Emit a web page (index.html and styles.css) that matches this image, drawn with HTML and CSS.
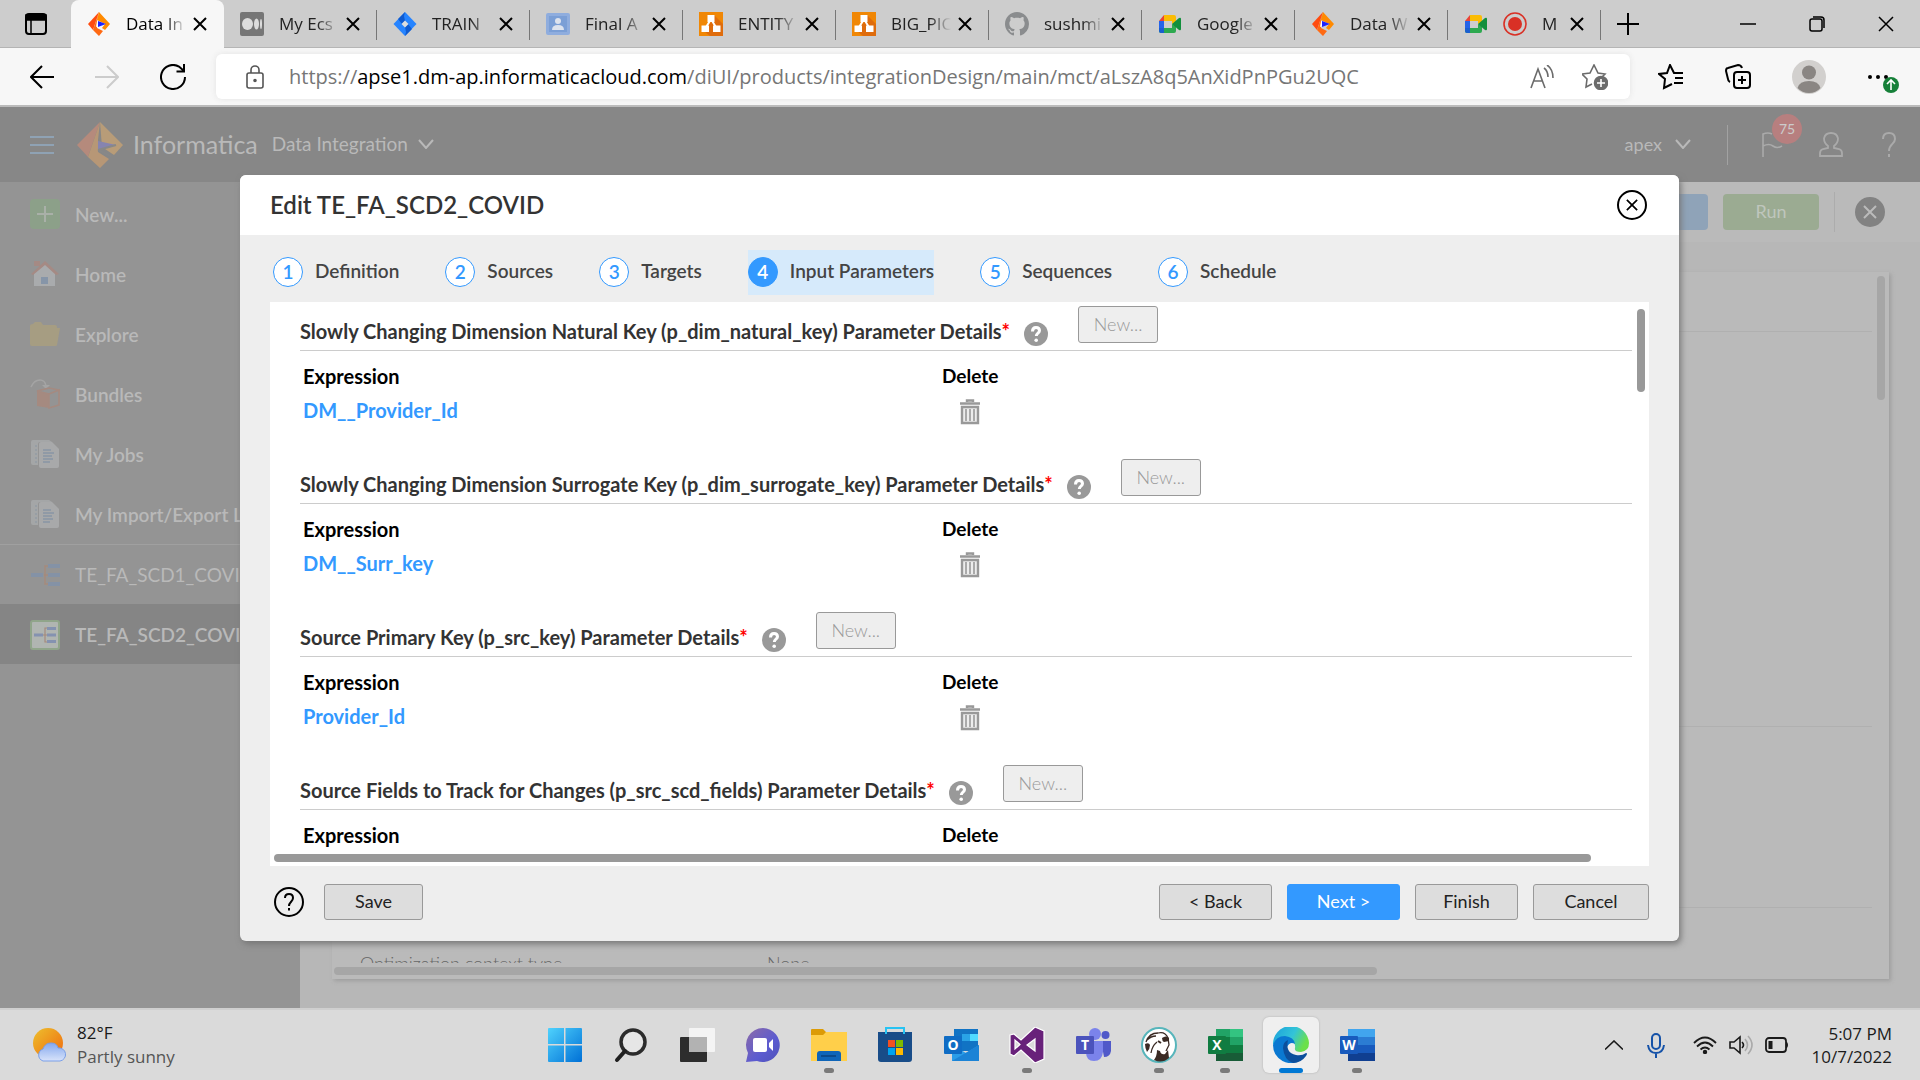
FILE: index.html
```html
<!DOCTYPE html>
<html lang="en">
<head>
<meta charset="utf-8">
<title>Data Integration</title>
<meta name="viewport" content="width=device-width, initial-scale=1">
<link rel="stylesheet" href="styles.css">
</head>
<body>
<svg class="sprite" aria-hidden="true">
  <symbol id="informatica" viewBox="0 0 24 24">
    <path d="M12 0 1 12l5 6z" fill="#ff4b0f"/>
    <path d="M12 0 6 18l6 6 4-5-6-3V9z" fill="#ff6a13"/>
    <path d="M12 0l11 12-5 6-3-2 3-4-8-4z" fill="#ff8a00"/>
    <path d="M10 9 9 15l9-3z" fill="#fff"/>
    <path d="M11 9v6l8-3z" fill="#1a23ff"/>
  </symbol>
  <symbol id="drawio" viewBox="0 0 24 24">
    <path d="M0 0h24v24H0z" fill="#f08705"/>
    <path d="M15 3l9 9v12H11l-6-5 7-9z" fill="#df6c0c"/>
    <path d="M12 7 6 17M12 7l6 10" stroke="#fff" stroke-width="2"/>
    <path d="M8.500 3h7v7h-7zM2.500 13.500h7.500v6.500H2.500zM14 13.500h7.500v6.500H14z" fill="#fff"/>
  </symbol>
  <symbol id="meet" viewBox="0 0 24 24">
    <path d="M1 9h5v11H3a2 2 0 0 1-2-2z" fill="#2563e8"/>
    <path d="M6 3v6H1z" fill="#ea4335"/>
    <path d="M6 3h10a2 2 0 0 1 2 2v5l-4 2V9H6z" fill="#fbbc04"/>
    <path d="M1 16h13v-4l4 2v5a2 2 0 0 1-2 2H3a2 2 0 0 1-2-2z" fill="#2da94f"/>
    <path d="M1 16h5v5H3a2 2 0 0 1-2-2z" fill="#1a5fd0"/>
    <path d="M14 12l7-6q2-1 2 1v10q0 2-2 1z" fill="#128f3c"/>
  </symbol>
  <symbol id="x" viewBox="0 0 14 14"><path d="M1 1l12 12M13 1 1 13" fill="none" stroke="currentColor" stroke-width="2"/></symbol>
  <symbol id="chevron" viewBox="0 0 16 10"><path d="M1 1l7 8 7-8" fill="none" stroke="currentColor" stroke-width="2"/></symbol>
  <symbol id="help" viewBox="0 0 24 24">
    <circle cx="12" cy="12" r="12" fill="#999"/>
    <path d="M8.500 9.500q0-4 3.500-4t3.500 3.300c0 2.400-3.200 2.400-3.200 5.200" fill="none" stroke="#fff" stroke-width="3"/>
    <circle cx="12.200" cy="18.200" r="1.800" fill="#fff"/>
  </symbol>
  <symbol id="trash" viewBox="0 0 22 26">
    <path d="M1 4.500h20M8 3V1.500h6V3" fill="none" stroke="#999" stroke-width="2.400"/>
    <path d="M3 8h16v16H3z" fill="#ededed" stroke="#999" stroke-width="2.400"/>
    <path d="M7 10v12M11 10v12M15 10v12" stroke="#999" stroke-width="1.600"/>
  </symbol>
  <symbol id="jobs" viewBox="0 0 30 30">
    <path d="M1 3q0-2 2-2h16l3 2H10q-2 0-2 2v21H3q-2 0-2-2z" fill="#a4a6a7"/>
    <path d="M5 7h2M5 11h2M5 15h2M5 19h2M5 23h2" stroke="#8a96a2"/>
    <path d="M9 5q0-2 2-2h11l7 7v17q0 2-2 2H11q-2 0-2-2z" fill="#a8a9aa"/>
    <path d="M13 11h8M13 14h11M13 17h9M13 20h10M13 23h7" stroke="#8895a5" stroke-width="1.600"/>
  </symbol>
  <symbol id="flow" viewBox="0 0 30 24">
    <path d="M14 12h4M20 3h-5v18h5M15 12h5" fill="none" stroke="#a58a7c" stroke-width="1.500"/>
    <path d="M1 10h12v4H1zM18 1h12v4H18zM18 10h12v4H18zM18 19h12v4H18z" fill="#8492a6"/>
  </symbol>
</svg>

<header class="tabs">
  <button class="tab-menu" aria-label="Tab actions"><svg width="22" height="22" viewBox="0 0 22 22"><rect x="1" y="1" width="20" height="20" rx="3" fill="none" stroke="#000" stroke-width="2"/><path d="M1 2h20v5H1zM6 7v14" stroke="#000" stroke-width="1.500"/></svg></button>
  <div class="tab active"><svg class="fav"><use href="#informatica"/></svg><span>Data In</span><button aria-label="Close"><svg><use href="#x"/></svg></button></div>
  <div class="tab"><svg class="fav" viewBox="0 0 24 24"><rect width="24" height="24" rx="2" fill="#767676"/><ellipse cx="7.500" cy="12" rx="5.500" ry="6" fill="#ddd"/><ellipse cx="16.500" cy="12" rx="2.500" ry="5.500" fill="#ddd"/><ellipse cx="21" cy="12" rx="1" ry="5" fill="#ddd"/></svg><span>My Ecs</span><button aria-label="Close"><svg><use href="#x"/></svg></button></div>
  <div class="tab"><svg class="fav" viewBox="0 0 24 24"><path d="M12 0l11.500 12L12 24 .5 12z" fill="#2684ff"/><path d="M12 0l-1 4 1 5-3 3-4-5zM12 24l1-4-1-5 3-3 4 5z" fill="#0f5bd0"/><path d="M12 8.500l3.500 3.500-3.500 3.500L8.500 12z" fill="#ddd"/></svg><span>TRAIN</span><button aria-label="Close"><svg><use href="#x"/></svg></button></div>
  <div class="tab"><svg class="fav" viewBox="0 0 24 24"><rect y="1" width="24" height="22" rx="2" fill="#8fadde"/><rect x="3" y="4" width="18" height="16" fill="#7b9fd6"/><circle cx="12" cy="9" r="3" fill="#dde3ee"/><path d="M6 18q0-5 6-5t6 5z" fill="#dde3ee"/></svg><span>Final A</span><button aria-label="Close"><svg><use href="#x"/></svg></button></div>
  <div class="tab"><svg class="fav"><use href="#drawio"/></svg><span>ENTITY</span><button aria-label="Close"><svg><use href="#x"/></svg></button></div>
  <div class="tab"><svg class="fav"><use href="#drawio"/></svg><span>BIG_PIC</span><button aria-label="Close"><svg><use href="#x"/></svg></button></div>
  <div class="tab"><svg class="fav" viewBox="0 0 16 16"><path fill="#8a8c8e" d="M8 0C3.580 0 0 3.580 0 8c0 3.540 2.290 6.530 5.470 7.590.4.070.55-.17.55-.38 0-.19-.01-.82-.01-1.490-2.010.37-2.530-.49-2.690-.94-.09-.23-.48-.94-.82-1.130-.28-.15-.68-.52-.01-.53.63-.01 1.080.58 1.230.82.72 1.210 1.870.87 2.330.66.07-.52.28-.87.51-1.070-1.780-.2-3.640-.89-3.640-3.950 0-.87.31-1.590.82-2.150-.08-.2-.36-1.020.08-2.120 0 0 .67-.21 2.200.82.64-.18 1.320-.27 2-.27s1.360.09 2 .27c1.530-1.040 2.200-.82 2.200-.82.44 1.100.16 1.920.08 2.120.51.56.82 1.270.82 2.150 0 3.070-1.870 3.750-3.650 3.950.29.25.54.73.54 1.480 0 1.070-.01 1.930-.01 2.200 0 .21.15.46.55.38A8.010 8.010 0 0 0 16 8c0-4.420-3.580-8-8-8z"/></svg><span>sushmi</span><button aria-label="Close"><svg><use href="#x"/></svg></button></div>
  <div class="tab"><svg class="fav"><use href="#meet"/></svg><span>Google</span><button aria-label="Close"><svg><use href="#x"/></svg></button></div>
  <div class="tab"><svg class="fav"><use href="#informatica"/></svg><span>Data W</span><button aria-label="Close"><svg><use href="#x"/></svg></button></div>
  <div class="tab"><svg class="fav"><use href="#meet"/></svg><svg class="fav" viewBox="0 0 24 24"><circle cx="12" cy="12" r="11" fill="none" stroke="#d93025" stroke-width="1.600"/><circle cx="12" cy="12" r="7" fill="#d93025"/></svg><span>M</span><button aria-label="Close"><svg><use href="#x"/></svg></button></div>
  <button class="new-tab" aria-label="New tab"><svg width="22" height="22" viewBox="0 0 22 22"><path d="M11 0v22M0 11h22" stroke="#000" stroke-width="2"/></svg></button>
  <div class="window-buttons">
    <button aria-label="Minimize"><svg width="16" height="16" viewBox="0 0 16 16"><path d="M0 8h16" stroke="#000" stroke-width="1.500"/></svg></button>
    <button aria-label="Restore"><svg width="16" height="16" viewBox="0 0 16 16" fill="none" stroke="#000" stroke-width="1.500"><rect x="1" y="3" width="12" height="12" rx="2"/><path d="M4 1h8q3 0 3 3v8"/></svg></button>
    <button aria-label="Close window"><svg width="16" height="16" viewBox="0 0 16 16"><path d="M1 1l14 14M15 1 1 15" stroke="#000" stroke-width="1.500"/></svg></button>
  </div>
</header>

<div class="toolbar">
  <button aria-label="Back"><svg width="24" height="24" viewBox="0 0 24 24" fill="none" stroke="#000" stroke-width="2"><path d="M24 12H1M12 1 1 12l11 11"/></svg></button>
  <button aria-label="Forward" disabled><svg width="24" height="24" viewBox="0 0 24 24" fill="none" stroke="#ccc" stroke-width="2"><path d="M0 12h23M12 1l11 11-11 11"/></svg></button>
  <button aria-label="Refresh"><svg width="26" height="26" viewBox="0 0 26 26" fill="none" stroke="#000" stroke-width="2"><path d="M25 13A12 12 0 1 1 19 2.600L24 7M24 0v7.500h-7.500"/></svg></button>
  <div class="address">
    <svg width="18" height="24" viewBox="0 0 18 24" fill="none" stroke="#555" stroke-width="1.600"><rect x="1" y="8" width="16" height="15" rx="2"/><path d="M5 8V5a4 4 0 0 1 8 0v3"/><circle cx="9" cy="15.500" r="1" fill="#555"/></svg>
    <div class="url" role="textbox" aria-label="Address and search bar" contenteditable="true" spellcheck="false">https://<b>apse1.dm-ap.informaticacloud.com</b>/diUI/products/integrationDesign/main/mct/aLszA8q5AnXidPnPGu2UQC</div>
    <button aria-label="Read aloud"><svg width="24" height="24" viewBox="0 0 24 24" fill="none" stroke="#6b6b6b" stroke-width="1.600"><path d="M1 23 8 4l7 19M4 16h8M14 3q4 3 4 9M17 0q6 4 6 13"/></svg></button>
    <button aria-label="Add to favorites"><svg width="26" height="26" viewBox="0 0 26 26" fill="none" stroke="#6b6b6b" stroke-width="1.600"><path d="M10 20l-6 3 1-8-5-5 8-1 4-8 4 8 7 1-3 3"/><circle cx="19" cy="19" r="6.500" fill="#6b6b6b"/><path d="M19 15v8M15 19h8" stroke="#fff"/></svg></button>
  </div>
  <button class="favorites" aria-label="Favorites"><svg width="26" height="26" viewBox="0 0 26 26" fill="none" stroke="#000" stroke-width="2"><path d="M14 20l-8 4 1-9-6-5 8-1 3-8 4 8h9M17 14h8M16 19h9"/></svg></button>
  <button aria-label="Collections"><svg width="26" height="26" viewBox="0 0 26 26" fill="none" stroke="#000" stroke-width="2"><rect x="9" y="8" width="16" height="16" rx="3"/><path d="M17 12v8M13 16h8M5 18q-2-1-2-3L1 7q0-3 2-3l10-3q3 0 4 3"/></svg></button>
  <button class="profile" aria-label="Profile"><svg width="34" height="34" viewBox="0 0 34 34"><circle cx="17" cy="17" r="17" fill="#d2d0ce"/><circle cx="17" cy="12.500" r="7" fill="#8a8683"/><path d="M5.500 28q2-7 11.500-7t11.500 7Q24 33 17 33T5.500 28z" fill="#8a8683"/></svg></button>
  <button aria-label="Settings and more"><svg width="32" height="40" viewBox="0 0 32 40"><circle cx="3" cy="20" r="2"/><circle cx="11" cy="20" r="2"/><circle cx="19" cy="20" r="2"/><circle cx="24" cy="28" r="8" fill="#168039"/><path d="M24 33V23.500M20 27l4-4 4 4" fill="none" stroke="#fff" stroke-width="1.600"/></svg></button>
</div>

<div class="app">
  <div class="app-header">
    <button class="burger" aria-label="Menu"><svg width="24" height="20" viewBox="0 0 24 20"><path d="M0 2h24M0 10h24M0 18h24" stroke="#8fa2b4" stroke-width="2"/></svg></button>
    <svg class="logo" width="46" height="46" viewBox="0 0 46 46"><path d="M23 0 0 23l11 12z" fill="#b58a7c"/><path d="M23 0 11 35l12 11 9-9-11-7V18z" fill="#b79776"/><path d="M23 0l23 23-9 10-12-8z" fill="#b89c78"/><path d="M21 19v9l18-5z" fill="#8684b0"/><path d="M21 28l13 6M21 28l18-5" stroke="#888" stroke-width="2"/></svg>
    <span class="brand">Informatica</span>
    <button class="product">Data Integration <svg width="16" height="10"><use href="#chevron"/></svg></button>
    <button class="org">apex <svg width="16" height="10"><use href="#chevron"/></svg></button>
    <span class="sep"></span>
    <button class="flag" aria-label="Notifications"><svg width="22" height="26" viewBox="0 0 22 26" fill="none" stroke="#aaa" stroke-width="1.600"><path d="M2 25V2q5-2 9 0M2 14q6-3 10 0t9 0"/></svg><span class="badge">75</span></button>
    <button aria-label="User"><svg width="24" height="26" viewBox="0 0 24 26" fill="none" stroke="#aaa" stroke-width="1.800"><path d="M9 14Q5 11 5 6.500 6 1 12 1t7 5.500Q19 11 15 14v2l5 1q3 1 3 4v3H1v-3q0-3 3-4l5-1z"/></svg></button>
    <button aria-label="Help"><svg width="16" height="26" viewBox="0 0 16 26" fill="none" stroke="#aaa" stroke-width="2"><path d="M2 7q0-6 6-6t6 6c0 5-6 5-6 12M8 22v3"/></svg></button>
  </div>

  <div class="workspace">
    <nav class="side">
      <a href="#"><svg viewBox="0 0 30 30"><rect width="30" height="30" rx="4" fill="#8ca089"/><path d="M15 7v16M7 15h16" stroke="#a9b0a8" stroke-width="2"/></svg>New...</a>
      <a href="#"><svg viewBox="0 0 30 30"><path d="M4 2h6v5H4z" fill="#a58a84"/><path d="M4 14 15 5l10 9v13H4z" fill="#a9abad"/><path d="M1 15 15 2l14 13-3 1L15 6 3 16z" fill="#a58a84"/><path d="M11 18h7v7h-7z" fill="#8695a8"/></svg>Home</a>
      <a href="#"><svg viewBox="0 0 30 30"><path d="M0 7q0-2 3-2l2-2h6l2 3h12q2 0 2 3h3l-3 17q0 1-2 1H2q-2 0-2-2z" fill="#a69d82"/></svg>Explore</a>
      <a href="#"><svg viewBox="0 0 30 30"><path d="M1 8Q4 1 10 1q5 0 6 6" fill="none" stroke="#a4a4a4" stroke-width="1.500"/><path d="M12 6l4 4 4-4z" fill="#a4a4a4"/><path d="M7 12l12 3v14L7 27z" fill="#a58a80"/><path d="M7 12l12-3 10 2-10 4zM19 15l10-4v15l-10 3z" fill="none" stroke="#a58a80" stroke-width="1.600"/></svg>Bundles</a>
      <a href="#"><svg><use href="#jobs"/></svg>My Jobs</a>
      <a href="#"><svg><use href="#jobs"/></svg>My Import/Export Logs</a>
      <a href="#" class="open"><svg><use href="#flow"/></svg>TE_FA_SCD1_COVID</a>
      <a href="#" class="open current"><svg viewBox="0 0 30 30"><rect x="1" y="1" width="28" height="28" rx="2" fill="#b0b5b1" stroke="#90a58a" stroke-width="2"/><path d="M13 15h4M19 8h-4v14h4M15 15h4" fill="none" stroke="#a58a7c" stroke-width="1.200"/><path d="M4 13.500h9v3H4zM17 7h9v3h-9zM17 13.500h9v3h-9zM17 20h9v3h-9z" fill="#8492b0"/></svg>TE_FA_SCD2_COVID</a>
    </nav>
    <main class="content">
      <div class="actions">
        <button class="act blue">Edit</button>
        <button class="act green">Run</button>
        <span class="sep"></span>
        <button class="close-task" aria-label="Close task"><svg width="14" height="14"><use href="#x"/></svg></button>
      </div>
      <section class="card">
        <div class="card-body">
          <div class="block short"></div>
          <div class="block tall"></div>
          <div class="block mid"></div>
          <dl class="prop"><dt>Optimization context type</dt><dd>None</dd></dl>
        </div>
        <div class="bar-v back-v"></div>
        <div class="bar-h back-h"></div>
      </section>
    </main>
  </div>

  <div class="overlay">
    <div class="dialog" role="dialog" aria-labelledby="dlg-title">
      <div class="dialog-head">
        <h1 id="dlg-title">Edit TE_FA_SCD2_COVID</h1>
        <button class="round" aria-label="Close dialog"><svg width="12" height="12"><use href="#x"/></svg></button>
      </div>
      <ol class="steps">
        <li><span>1</span><a href="#">Definition</a></li>
        <li><span>2</span><a href="#">Sources</a></li>
        <li><span>3</span><a href="#">Targets</a></li>
        <li class="on" aria-current="step"><span>4</span><a href="#">Input Parameters</a></li>
        <li><span>5</span><a href="#">Sequences</a></li>
        <li><span>6</span><a href="#">Schedule</a></li>
      </ol>
      <div class="panel">
        <div class="panel-body">
          <section class="param">
            <div class="param-head"><h2>Slowly Changing Dimension Natural Key (p_dim_natural_key) Parameter Details<em>*</em></h2><svg class="help"><use href="#help"/></svg><button class="btn new" disabled>New...</button></div>
            <table><thead><tr><th>Expression</th><th>Delete</th></tr></thead><tbody><tr><td><a href="#">DM__Provider_Id</a></td><td><button class="trash" aria-label="Delete DM__Provider_Id"><svg><use href="#trash"/></svg></button></td></tr></tbody></table>
          </section>
          <section class="param">
            <div class="param-head"><h2>Slowly Changing Dimension Surrogate Key (p_dim_surrogate_key) Parameter Details<em>*</em></h2><svg class="help"><use href="#help"/></svg><button class="btn new" disabled>New...</button></div>
            <table><thead><tr><th>Expression</th><th>Delete</th></tr></thead><tbody><tr><td><a href="#">DM__Surr_key</a></td><td><button class="trash" aria-label="Delete DM__Surr_key"><svg><use href="#trash"/></svg></button></td></tr></tbody></table>
          </section>
          <section class="param">
            <div class="param-head"><h2>Source Primary Key (p_src_key) Parameter Details<em>*</em></h2><svg class="help"><use href="#help"/></svg><button class="btn new" disabled>New...</button></div>
            <table><thead><tr><th>Expression</th><th>Delete</th></tr></thead><tbody><tr><td><a href="#">Provider_Id</a></td><td><button class="trash" aria-label="Delete Provider_Id"><svg><use href="#trash"/></svg></button></td></tr></tbody></table>
          </section>
          <section class="param">
            <div class="param-head"><h2>Source Fields to Track for Changes (p_src_scd_fields) Parameter Details<em>*</em></h2><svg class="help"><use href="#help"/></svg><button class="btn new" disabled>New...</button></div>
            <table><thead><tr><th>Expression</th><th>Delete</th></tr></thead></table>
          </section>
        </div>
        <div class="bar-v front-v"></div>
        <div class="bar-h front-h"></div>
      </div>
      <div class="dialog-foot">
        <button class="round" aria-label="Help"><svg width="14" height="20" viewBox="0 0 14 20" fill="none" stroke="#000" stroke-width="2"><path d="M3 6q0-4 4-4t4 4c0 3.500-4 4-4 8M7 16v2.500"/></svg></button>
        <button class="btn save">Save</button>
        <span class="grow"></span>
        <button class="btn">&lt; Back</button>
        <button class="btn primary">Next &gt;</button>
        <button class="btn finish">Finish</button>
        <button class="btn cancel">Cancel</button>
      </div>
    </div>
  </div>
</div>

<footer class="taskbar">
  <button class="weather">
    <svg width="34" height="34" viewBox="0 0 34 34"><defs><linearGradient id="sun" x1="0" y1="0" x2="1" y2="1"><stop offset="0" stop-color="#edc02e"/><stop offset="1" stop-color="#f0690c"/></linearGradient><linearGradient id="cloud" x1="0" y1="0" x2="0" y2="1"><stop offset="0" stop-color="#84a8ee"/><stop offset="1" stop-color="#d8e3fa"/></linearGradient></defs><circle cx="15" cy="15" r="15" fill="url(#sun)"/><path d="M10 33a7 6.500 0 0 1 0-12q2-6 8-6t7 5a6.500 6.500 0 0 1 2 13z" fill="url(#cloud)" stroke="#7a9fe8" stroke-width="1"/></svg>
    <span><span class="temp">82°F</span><br>Partly sunny</span>
  </button>
  <div class="dock">
    <button aria-label="Start"><svg viewBox="0 0 36 36"><defs><linearGradient id="win" x1="0" y1="0" x2="1" y2="1"><stop offset="0" stop-color="#4fd2fd"/><stop offset="1" stop-color="#0070d6"/></linearGradient></defs><path d="M1 2q0-1 1-1h15v16H1zM18.500 1H34q1 0 1 1v15H18.500zM1 18.500h16V35H2q-1 0-1-1zM18.500 18.500H35V34q0 1-1 1H18.500z" fill="url(#win)"/></svg></button>
    <button aria-label="Search"><svg viewBox="0 0 36 36"><circle cx="20" cy="15" r="12" fill="#e6e6e6" stroke="#2b2b2b" stroke-width="3.500"/><path d="M12 24 4 33" stroke="#1f1f1f" stroke-width="4" stroke-linecap="round"/></svg></button>
    <button aria-label="Task view"><svg viewBox="0 0 36 36"><rect x="1" y="10" width="27" height="25" rx="1" fill="#2d2d2d"/><rect x="10" y="1" width="26" height="24" rx="1" fill="#f4f4f4"/><path d="M10 10h18v15H10z" fill="#b2b2b2"/></svg></button>
    <button aria-label="Chat"><svg viewBox="0 0 36 36"><defs><linearGradient id="chat" x1="0" y1="0" x2="1" y2="1"><stop offset="0" stop-color="#8d6ba8"/><stop offset=".6" stop-color="#5b5bd0"/><stop offset="1" stop-color="#4f52b8"/></linearGradient></defs><path d="M18 1a17 17 0 1 1-6 33l-11 1 2-9A17 17 0 0 1 18 1z" fill="url(#chat)"/><rect x="8" y="11" width="14" height="14" rx="2" fill="#fff"/><path d="M24 16l4-4v12l-4-4z" fill="#fff"/></svg></button>
    <button class="running" aria-label="File Explorer"><svg viewBox="0 0 36 36"><path d="M0 3q0-1 1-1h11l3 3h20q1 0 1 1v8H0z" fill="#dc9b06"/><path d="M0 8h12l3-3h21v29H0z" fill="#ffcf4a"/><path d="M6 34v-7q0-3 3-3h18q3 0 3 3v7z" fill="#0f65b8"/><path d="M10 29h15" stroke="#0a4a8c" stroke-width="2"/></svg></button>
    <button aria-label="Store"><svg viewBox="0 0 36 36"><path d="M1 5h34v27q0 3-3 3H4q-3 0-3-3z" fill="#184c88"/><path d="M9 7V1h18v6" fill="none" stroke="#27c3f3" stroke-width="2"/><path d="M11 13h7v7h-7z" fill="#f25022"/><path d="M19 13h7v7h-7z" fill="#7fba00"/><path d="M11 21h7v7h-7z" fill="#00a4ef"/><path d="M19 21h7v7h-7z" fill="#ffb900"/></svg></button>
    <button aria-label="Outlook"><svg viewBox="0 0 36 36"><path d="M11 2h24v22H11z" fill="#1173c4"/><path d="M19 7h8v7h-8z" fill="#2aa3e6"/><path d="M27 7h8v7h-8z" fill="#50d9ff"/><path d="M9 18l14 8 13-8v16H9z" fill="#2a9de8"/><path d="M9 34l27-16v16z" fill="#1b83d6"/><rect x="1" y="9" width="18" height="18" rx="1" fill="#0f6cc4"/><text x="10" y="23" class="letter">O</text></svg></button>
    <button class="running" aria-label="Visual Studio"><svg viewBox="0 0 36 36"><path d="M1 8l4-1 7 6L26 0l9 4v28l-9 4-14-13-7 6-4-2zM6 13v9l5-4.500zM26 12l-8 6 8 6z" fill="#68217a" fill-rule="evenodd" stroke="#fff" stroke-width="1.200"/></svg></button>
    <button aria-label="Teams"><svg viewBox="0 0 36 36"><circle cx="20" cy="7" r="6" fill="#7b83eb"/><circle cx="30.500" cy="8" r="4" fill="#5059c9"/><path d="M26 14h10v10q-1 6-7 6z" fill="#5059c9"/><path d="M11 14h17v11q-1 9-9 9t-8-9z" fill="#7b83eb"/><rect x="1" y="9" width="18" height="18" rx="1" fill="#4b53bc"/><text x="10" y="23" class="letter">T</text></svg></button>
    <button class="running" aria-label="DBeaver"><svg viewBox="0 0 36 36"><circle cx="18" cy="18" r="17" fill="#fff" stroke="#57b5bb" stroke-width="2"/><path d="M5 15Q8 6 17 6q7-2 10 5l1 7-3 6M6 13q4-4 9-4M16 15q-5 4-6 11" fill="none" stroke="#3a2a24" stroke-width="1.300"/><path d="M21 11q4-3 7 0v3l-5 1q-2-1-2-4zM4 17q4-2 5 1 0 4-3 7-2-4-2-8zM13 33q3-4 3-10l3 1q1 4 5 3l3-4 1 8q-7 6-15 2z" fill="#3a2a24"/><path d="M17 14l3 2" stroke="#3a2a24" stroke-width="2"/></svg></button>
    <button class="running" aria-label="Excel"><svg viewBox="0 0 36 36"><path d="M9 2h14v8H9z" fill="#21a366"/><path d="M23 2h13v8H23z" fill="#33c481"/><path d="M9 10h14v8H9z" fill="#107c41"/><path d="M23 10h13v8H23z" fill="#21a366"/><path d="M9 18h27v8H9z" fill="#107c41"/><path d="M9 26h27v8H9z" fill="#185c37"/><rect x="1" y="9" width="18" height="18" rx="1" fill="#107c41"/><text x="10" y="23" class="letter">X</text></svg></button>
    <button class="running focused" aria-label="Edge"><svg viewBox="0 0 36 36"><defs><linearGradient id="edge" x1="0" y1="0" x2="1" y2=".4"><stop offset="0" stop-color="#1a9fdc"/><stop offset=".6" stop-color="#33c4d8"/><stop offset="1" stop-color="#6be04a"/></linearGradient></defs><path d="M0 18a18 18 0 0 1 36-2q0 8-8 9-7 0-6-4 1-6-6-8Q6 11 0 18z" fill="url(#edge)"/><path d="M0 18Q3 9 12 9q9 1 10 8-5-3-8 3-1 10 10 12l4 1A18 18 0 0 1 0 18z" fill="#0a78d1"/><path d="M10 21q0-6 5-8-3 13 8 15 6 1 10-2 2 0 0 3-5 7-13 7-9-3-10-15z" fill="#0c4f9c"/></svg></button>
    <button class="running" aria-label="Word"><svg viewBox="0 0 36 36"><path d="M9 2h27v8H9z" fill="#41a5ee"/><path d="M9 10h27v8H9z" fill="#2b7cd3"/><path d="M9 18h27v8H9z" fill="#185abd"/><path d="M9 26h27v8H9z" fill="#103f91"/><rect x="1" y="9" width="18" height="18" rx="1" fill="#185abd"/><text x="10" y="23" class="letter">W</text></svg></button>
  </div>
  <div class="tray">
    <svg width="18" height="10" viewBox="0 0 18 10" fill="none" stroke="#1a1a1a" stroke-width="1.600"><path d="M0 9.500 9 1l9 8.500"/></svg>
    <svg class="mic" width="18" height="26" viewBox="0 0 18 26" fill="none" stroke="#1552a8" stroke-width="2"><rect x="5" y="2" width="8" height="15" rx="4"/><path d="M1 13q1 8 8 8t8-8M9 21v5"/></svg>
    <svg width="24" height="18" viewBox="0 0 24 18" fill="none" stroke="#1a1a1a" stroke-width="1.800"><path d="M1 7q11-11 22 0M4 10.500q8-8 16 0M7.500 13.500q4.500-4 9 0"/><circle cx="12" cy="16" r="1.300" fill="#1a1a1a"/></svg>
    <svg width="24" height="20" viewBox="0 0 24 20" fill="none" stroke="#1a1a1a" stroke-width="1.600"><path d="M1 7h4l6-5v16l-6-5H1zM13 7q3 3 0 6"/><path d="M16 4q5 6 0 12M19 1q8 9 0 18" stroke="#aaa"/></svg>
    <svg width="24" height="16" viewBox="0 0 24 16"><rect x="1" y="1" width="20" height="14" rx="3" fill="none" stroke="#1a1a1a" stroke-width="1.800"/><path d="M3.500 4h4v8h-4zM21 5h1q2 3 0 6h-1z" fill="#1a1a1a"/></svg>
    <div class="clock">5:07 PM<br>10/7/2022</div>
  </div>
</footer>
</body>
</html>
```
FILE: styles.css
```css
*, *::before, *::after { box-sizing: border-box; }
html, body { height: 100%; }
body {
  margin: 0;
  display: flex;
  flex-direction: column;
  overflow: hidden;
  font-family: "Open Sans", "Noto Sans", sans-serif;
  font-size: 18px;
  color: #1a1a1a;
}
button { margin: 0; padding: 0; border: 0; background: none; font: inherit; color: inherit; }
a { color: inherit; text-decoration: none; }
svg { display: block; flex: none; }
.sprite { position: absolute; width: 0; height: 0; }
.grow { flex: 1; }

/* Browser tabs */
.tabs {
  flex: none;
  display: flex;
  align-items: center;
  height: 48px;
  background: #cdcdcd;
  border-bottom: 1px solid #b4b4b4;
}
.tab-menu { width: 71px; padding-left: 25px; }
.tab {
  position: relative;
  display: flex;
  align-items: center;
  gap: 15px;
  width: 153px;
  height: 48px;
  padding: 0 17px 0 16px;
  color: #222;
}
.tab .fav { width: 24px; height: 24px; }
.tab span {
  flex: 1;
  margin-right: -8px;
  overflow: hidden;
  white-space: nowrap;
  font-size: 17px;
  -webkit-mask-image: linear-gradient(90deg, #000 64%, transparent);
  mask-image: linear-gradient(90deg, #000 64%, transparent);
}
.tab button svg { width: 14px; height: 14px; color: #000; }
.tab:not(.active)::after {
  content: "";
  position: absolute;
  right: 0;
  top: 10px;
  width: 1px;
  height: 30px;
  background: #777;
}
.tab.active { background: #f7f7f7; border-radius: 8px 8px 0 0; color: #000; }
.new-tab { margin-left: 16px; }
.window-buttons { margin-left: auto; display: flex; gap: 53px; padding-right: 26px; }

/* Address row */
.toolbar {
  flex: none;
  display: flex;
  align-items: center;
  height: 59px;
  padding: 0 21px 0 30px;
  gap: 41px;
  background: #f7f7f7;
  border-bottom: 2px solid #bbb;
}
.address {
  flex: 1;
  display: flex;
  align-items: center;
  gap: 28px;
  height: 45px;
  margin-left: -11px;
  margin-right: -13px;
  padding: 0 22px 0 30px;
  border-radius: 6px;
  background: #fff;
  box-shadow: 0 0 6px #e4e4e4;
}
.url { flex: 1; margin-left: -3px; font-size: 20px; color: #767676; white-space: nowrap; outline: 0; }
.url b { font-weight: 400; color: #000; }

/* Application frame */
.app {
  position: relative;
  flex: 1;
  min-height: 0;
  display: flex;
  flex-direction: column;
  overflow: hidden;
  font-family: Lato, "Open Sans", sans-serif;
}
.app-header {
  flex: none;
  display: flex;
  align-items: center;
  height: 75px;
  padding: 0 23px 0 30px;
  background: #878787;
  color: #b9b9b9;
}
.logo { margin: 0 10px 0 23px; }
.brand { padding-bottom: 2px; font-size: 25px; margin-right: 14px; }
.product, .org { display: flex; align-items: center; padding-bottom: 2px; }
.product { gap: 10px; font-size: 19px; }
.org { gap: 13px; margin-left: auto; font-size: 18px; }
.sep { width: 1px; height: 40px; background: #a2a2a2; }
.app-header .sep { margin: 0 33px 0 36px; }
.flag { position: relative; margin-right: 36px; }
.badge {
  position: absolute;
  left: 11px;
  top: -18px;
  width: 30px;
  height: 30px;
  border-radius: 50%;
  background: #b77f7f;
  color: #ccc;
  font-size: 14px;
  line-height: 30px;
  text-align: center;
}
.flag + button { margin-right: 38px; }

.workspace { flex: 1; min-height: 0; display: flex; }
.side { flex: none; width: 300px; padding-top: 2px; background: #949494; }
.side a {
  display: flex;
  align-items: center;
  gap: 15px;
  height: 60px;
  padding-left: 30px;
  font-size: 19px;
  font-weight: 600;
  color: #b9b9b9;
  white-space: nowrap;
  overflow: hidden;
}
.side svg { width: 30px; height: 30px; }
.side .open { border-top: 1px solid #a0a0a0; font-weight: 400; }
.side .current { border-top-color: #858585; background: #858585; font-weight: 600; }

.content { flex: 1; min-width: 0; display: flex; flex-direction: column; background: #b7b7b7; }
.actions {
  flex: none;
  display: flex;
  justify-content: flex-end;
  align-items: center;
  gap: 15px;
  height: 60px;
  padding-right: 35px;
  background: #bababa;
}
.act { width: 96px; height: 36px; padding-bottom: 2px; border-radius: 4px; color: #bfc6bd; }
.act.blue { background: #8fa3b8; }
.act.green { background: #9bab92; }
.actions .sep { background: #acacac; margin-right: 5px; }
.close-task { display: grid; place-items: center; width: 30px; height: 30px; border-radius: 50%; background: #828282; color: #bbb; }
.card {
  position: relative;
  flex: 1;
  min-height: 0;
  display: flex;
  margin: 30px 31px 29px 32px;
  padding: 0 17px 16px;
  background: #bababa;
  box-shadow: 2px 2px 4px #9e9e9e;
}
.card-body { flex: 1; overflow: hidden; }
.block { border-bottom: 1px solid #b0b0b0; }
.block.short { height: 60px; }
.block.tall { height: 395px; }
.block.mid { height: 181px; }
.prop { display: grid; grid-template-columns: 407px 1fr; margin: 43px 11px 0; line-height: 24px; font-weight: 300; color: #666; }
.prop dd { margin: 0; }
.bar-v, .bar-h { position: absolute; border-radius: 4px; }
.bar-v { width: 8px; }
.bar-h { height: 8px; }
.back-v, .back-h { background: #a6a6a6; }
.back-v { top: 4px; right: 4px; height: 124px; }
.back-h { left: 2px; bottom: 4px; width: 67%; }

/* Wizard dialog */
.overlay { position: absolute; inset: 0; display: flex; padding: 68px 241px 67px 240px; }
.dialog {
  flex: 1;
  min-width: 0;
  display: flex;
  flex-direction: column;
  border-radius: 6px;
  overflow: hidden;
  background: #eee;
  box-shadow: 2px 3px 6px #777;
}
.dialog-head {
  flex: none;
  display: flex;
  align-items: center;
  justify-content: space-between;
  height: 60px;
  padding: 0 32px 0 30px;
  background: #fff;
}
h1 { margin: 0; padding-bottom: 2px; font-size: 24px; font-weight: 600; color: #333; }
.round { display: grid; place-items: center; flex: none; width: 30px; height: 30px; border: 2px solid #000; border-radius: 50%; color: #000; }
.steps {
  flex: none;
  display: flex;
  gap: 46px;
  margin: 0;
  padding: 15px 33px 7px;
  list-style: none;
}
.steps li { display: flex; align-items: center; gap: 12px; height: 45px; padding-bottom: 2px; font-size: 19px; font-weight: 600; color: #444; white-space: nowrap; }
.steps a { padding-bottom: 2px; }
.steps span { width: 30px; height: 30px; border: 1px solid #39f; border-radius: 50%; background: #fff; color: #39f; line-height: 27px; text-align: center; }
.steps .on { background: #d6eafb; }
.steps .on span { background: #39f; color: #fff; }
.panel { position: relative; flex: 1; min-height: 0; margin: 0 30px; background: #fff; }
.panel-body { height: 100%; overflow: hidden; padding: 0 17px 0 30px; }
.param { height: 153px; }
.param-head { display: flex; align-items: flex-end; height: 49px; border-bottom: 1px solid #ccc; }
h2 { margin: 0 0 7px; font-size: 20px; line-height: 24px; font-weight: 700; color: #333; white-space: nowrap; }
h2 em { color: #f00; font-style: normal; }
.help { width: 24px; height: 24px; margin: 0 30px 4px 14px; }
.btn {
  height: 36px;
  min-width: 113px;
  padding: 0 0 2px;
  border: 1px solid #999;
  border-radius: 3px;
  background: #ddd;
  color: #222;
  font-size: 18px;
}
.btn.new { height: 37px; min-width: 80px; margin-bottom: 7px; background: #eee; color: #999; font-weight: 300; }
.btn.save { min-width: 99px; margin-left: 5px; }
.btn.finish { min-width: 103px; }
.btn.cancel { min-width: 116px; }
.btn.primary { border-color: #39f; background: #39f; color: #fff; }
table { width: 100%; margin-top: 10px; border-collapse: collapse; table-layout: fixed; line-height: 30px; font-size: 20px; }
th, td { padding: 0 3px; text-align: left; color: #000; font-weight: 700; vertical-align: middle; }
td { padding-top: 4px; }
th + th { font-size: 19px; }
th:first-child { width: 639px; }
td a { color: #39f; }
.trash { display: block; margin: 4px 0 0 17px; }
.trash svg { width: 22px; height: 26px; }
.front-v, .front-h { background: #999; }
.front-v { top: 7px; right: 4px; height: 83px; }
.front-h { left: 4px; right: 58px; bottom: 4px; }
.dialog-foot { flex: none; display: flex; align-items: center; gap: 15px; height: 75px; padding: 0 30px 3px 34px; }

/* Desktop taskbar */
.taskbar {
  flex: none;
  display: grid;
  grid-template-columns: 1fr auto 1fr;
  align-items: center;
  height: 72px;
  background: #dadada;
  border-top: 2px solid #cfcfcf;
}
.weather { justify-self: start; display: flex; align-items: center; gap: 10px; padding-left: 33px; text-align: left; font-size: 17px; line-height: 24px; color: #555; }
.temp { color: #1a1a1a; }
.dock { display: flex; gap: 10px; padding-left: 2px; }
.dock button { position: relative; display: grid; place-items: center; width: 56px; height: 56px; border-radius: 6px; }
.dock svg { width: 36px; height: 36px; }
.running::after { content: ""; position: absolute; left: 50%; bottom: 0; width: 10px; height: 5px; margin-left: -5px; border-radius: 3px; background: #7a7a7a; }
.focused { background: #efefef; box-shadow: 0 0 2px #aaa; }
.focused::after { width: 24px; margin-left: -12px; background: #0078d4; }
.letter { font: 700 14px "Open Sans", sans-serif; fill: #fff; text-anchor: middle; }
.tray { justify-self: end; display: flex; align-items: center; gap: 12px; padding-right: 28px; }
.mic { margin: 0 16px 0 12px; }
.clock { margin-left: 10px; text-align: right; font-size: 17px; line-height: 23px; }
```
